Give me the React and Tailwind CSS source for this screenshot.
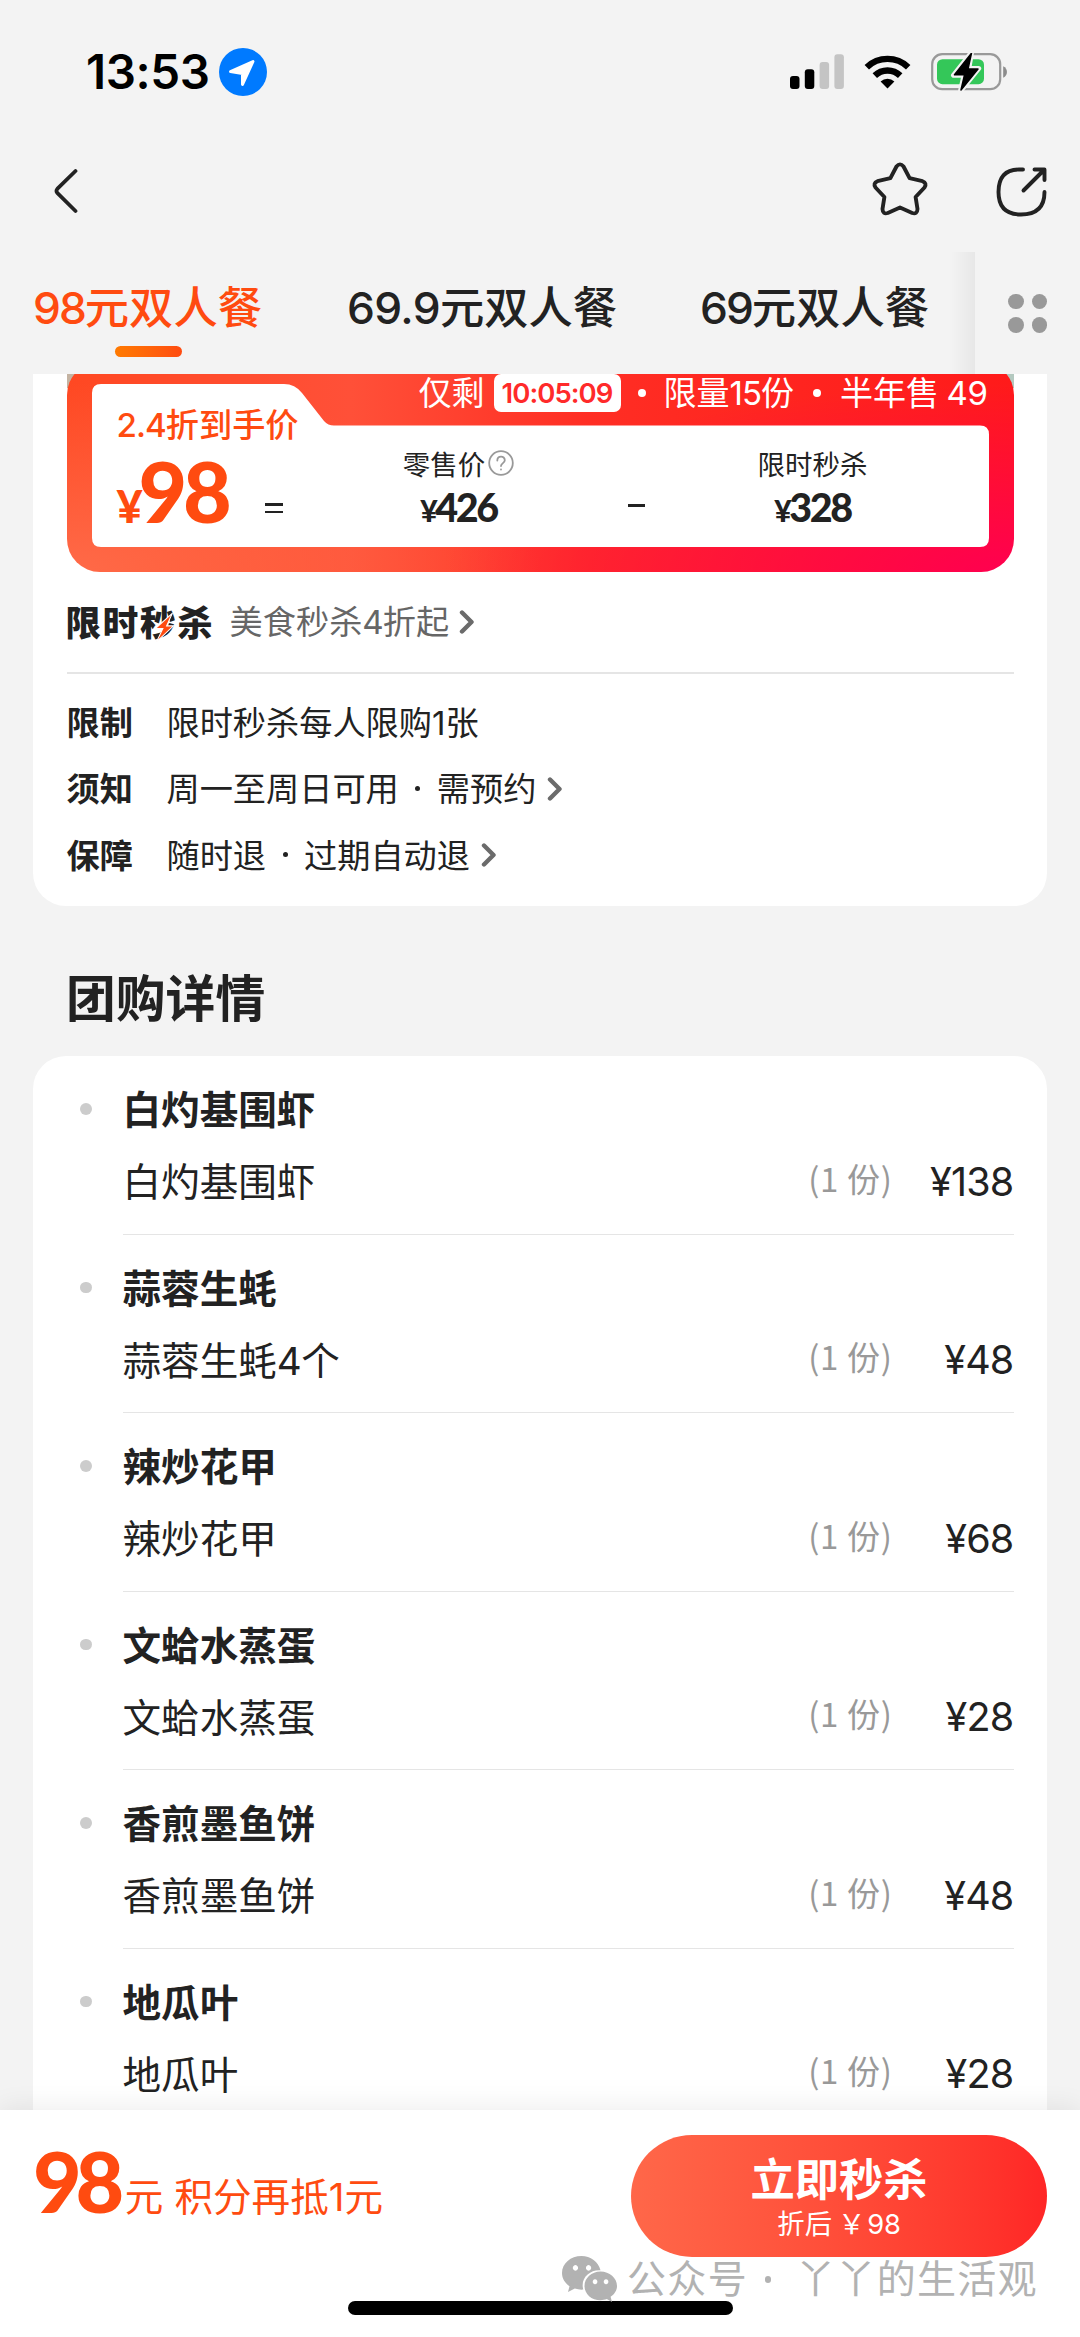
import React from "react";

const dishes = [
  { name: "白灼基围虾", item: ["白灼基围虾"], price: "138" },
  { name: "蒜蓉生蚝", item: ["蒜蓉生蚝", "4", "个"], price: "48" },
  { name: "辣炒花甲", item: ["辣炒花甲"], price: "68" },
  { name: "文蛤水蒸蛋", item: ["文蛤水蒸蛋"], price: "28" },
  { name: "香煎墨鱼饼", item: ["香煎墨鱼饼"], price: "48" },
  { name: "地瓜叶", item: ["地瓜叶"], price: "28" },
];

// Latin digits set inside Chinese text
function N({ children, className = "tracking-[-0.03em]" }) {
  return (
    <span className={"font-['Inter','Noto_Sans_CJK_SC',sans-serif] leading-[0] " + className}>
      {children}
    </span>
  );
}

function Chevron({ className = "" }) {
  return (
    <svg className={className} width="16" height="26" viewBox="0 0 16 26" fill="none" stroke="#6b6b6b" strokeWidth="4.4" strokeLinecap="round" strokeLinejoin="round">
      <path d="M3 3.5 12.5 13 3 22.5" />
    </svg>
  );
}

function StatusBar() {
  return (
    <div className="flex h-[144px] items-center pl-[86px] pr-[72px]">
      <span className="w-[133px] whitespace-nowrap font-['Inter',sans-serif] text-[47.5px] font-semibold leading-none tracking-[-0.008em] text-black">
        13:53
      </span>
      <svg width="48" height="48" viewBox="0 0 48 48">
        <circle cx="24" cy="24" r="24" fill="#007aff" />
        <path d="M11.5 23.5 34 13.5 23.5 36.5V25.5Z" fill="#fff" stroke="#fff" strokeWidth="3" strokeLinejoin="round" />
      </svg>
      <svg className="ml-auto" width="218" height="38" viewBox="0 0 218 38">
        <rect x="0" y="23" width="9.5" height="13" rx="3" />
        <rect x="14.8" y="16.3" width="9.5" height="19.7" rx="3" />
        <rect x="29.6" y="9" width="9.5" height="27" rx="3" fill="#c4c4c4" />
        <rect x="44.4" y="1.3" width="9.5" height="34.7" rx="3" fill="#c4c4c4" />
        <path d="M97.5 35.5 90.6 28.4A10.2 10.2 0 0 1 104.4 28.4Z" />
        <g fill="none" stroke="#000" strokeWidth="6.4">
          <path d="M84.8 22.6a18.2 18.2 0 0 1 25.4 0" />
          <path d="M76.8 14.2a30 30 0 0 1 41.4 0" />
        </g>
        <rect x="142.2" y="1.2" width="68" height="35" rx="10" fill="none" stroke="#999" strokeWidth="2.2" />
        <path d="M213.2 13.2c5 2.3 5 9.3 0 11.600z" fill="#8c8c8c" />
        <rect x="147" y="6.2" width="47" height="25" rx="5.500" fill="#34c759" />
        <path d="M181.500-.5 163.500 22.200H174L170.500 38 188.700 15.500H178.800Z" stroke="#f3f3f3" strokeWidth="5" strokeLinejoin="round" />
        <path d="M181.500 0.200 164.500 21.800H174.500L171 37 188 16H178Z" strokeLinejoin="round" stroke="#000" strokeWidth="1.500" />
      </svg>
    </div>
  );
}

function NavBar() {
  return (
    <div className="flex h-[108px] items-start pl-[53px] pr-[32px]">
      <svg className="mt-[24px]" width="28" height="46" viewBox="0 0 28 46" fill="none" stroke="#222" strokeWidth="3.800" strokeLinecap="round" strokeLinejoin="round">
        <path d="M22.500 3 4.500 20.600Q2.500 23 4.500 25.200L22.500 43" />
      </svg>
      <svg className="ml-auto mt-[17px]" width="58" height="56" viewBox="0 0 58 56" fill="none" stroke="#222" strokeWidth="3.900" strokeLinejoin="round">
        <path d="M25.500 5.500Q29 1.200 32.500 5.500L38.600 17.200 51.500 20.200Q56.300 22.200 53.500 26.500L44.600 36 46.500 48Q46.300 53.500 41.200 52L29 46.500 16.800 52Q11.700 53.500 11.500 48L13.400 36 4.500 26.500Q1.700 22.200 6.500 20.200L19.400 17.200Z" />
      </svg>
      <svg className="ml-[67px] mt-[22px]" width="52" height="52" viewBox="0 0 52 52" fill="none" stroke="#222" strokeWidth="3.900" strokeLinecap="round" strokeLinejoin="round">
        <path d="M27 3.500H23Q2.500 3.500 2.500 26T25 48.500Q48.500 48.500 48.500 26" />
        <path d="M38.500 3.500H48.500V14M48 4 27.500 24.500" />
      </svg>
    </div>
  );
}

function Tabs() {
  return (
    <div className="flex h-[122px]">
      <div className="relative flex h-full w-[975px] gap-[85px] overflow-hidden whitespace-nowrap pl-[33px] pt-[31px] text-[44.3px] font-medium leading-[44px] text-[#222]">
        <div className="flex w-[229px] flex-col items-center text-[#ff4b10]">
          <span className="h-[44px]"><N className="tracking-[-0.045em]">98</N>元双人餐</span>
          <span className="mt-[19px] h-[11px] w-[67px] translate-x-px rounded-full bg-linear-to-r from-[#ff7a00] to-[#ff4b10]" />
        </div>
        <div className="w-[268px]"><N className="tracking-[-0.015em]">69.9</N>元双人餐</div>
        <div><N className="tracking-[-0.045em]">69</N>元双人餐</div>
        <div className="absolute right-0 top-0 h-full w-[24px] bg-linear-to-r from-transparent to-black/5" />
      </div>
      <div className="flex flex-1 items-center">
        <div className="ml-[33px] grid grid-cols-2 gap-x-[8px] gap-y-[8px]">
          {[0, 1, 2, 3].map((i) => (
            <span key={i} className="size-[15.500px] rounded-full bg-[#999]" />
          ))}
        </div>
      </div>
    </div>
  );
}

function Price({ value }) {
  return (
    <span className="mt-[9px] whitespace-nowrap font-['Lato',sans-serif] text-[39.5px] font-black leading-[40px] tracking-[-0.06em]">
      <span className="text-[30px]">¥</span>
      {value}
    </span>
  );
}

function Banner() {
  return (
    <div className="relative h-[198px] w-[947px]">
      {/* background scrolled partly under the tab bar */}
      <div className="absolute inset-0 overflow-hidden bg-[linear-gradient(90deg,#c4b3a2_50%,#b4c9c0_50%)] bg-[length:100%_14px] bg-no-repeat">
        <div className="-mt-[12px] h-[210px] rounded-[33px] bg-[radial-gradient(ellipse_60%_90%_at_100%_100%,#ff0050_0%,#ff005000_100%),radial-gradient(ellipse_50%_90%_at_0%_100%,#ff6a48_0%,#ff6a4800_100%),linear-gradient(90deg,#ff4822_0%,#ff5038_30%,#ff2e24_55%,#ff1a1a_100%)]">
          <svg width="947" height="210" viewBox="0 0 947 210">
            <path d="M25 31Q25 22 34 22H217Q228 22 235 31L257 59Q261 63.500 267 63.500H913Q922 63.500 922 72.500V176Q922 185 913 185H34Q25 185 25 176Z" fill="#fff" />
          </svg>
        </div>
      </div>
      <div className="relative flex h-[51px] items-start whitespace-nowrap pl-[352px] text-[33px] leading-[38px] text-white">
        <span className="-mt-[2px]">仅剩</span>
        <span className="ml-[9px] flex h-[38px] w-[127px] items-center justify-center rounded-[7px] bg-white font-['Inter',sans-serif] text-[27.500px] font-semibold tracking-[-0.035em] text-[#ff2a2a]">
          10:05:09
        </span>
        <span className="ml-[17px] mt-[15px] size-[8px] rounded-full bg-white" />
        <span className="-mt-[2px] ml-[18px]">限量<N>15</N>份</span>
        <span className="ml-[19px] mt-[15px] size-[8px] rounded-full bg-white" />
        <span className="-mt-[2px] ml-[19px]">半年售 <N className="tracking-[-0.01em]">49</N></span>
      </div>
      <div className="relative flex h-[122px] whitespace-nowrap">
        <div className="-mt-[20px] w-[180px] pl-[50px] text-[#ff4b10]">
          <div className="text-[33.2px] font-medium leading-[36px]"><N className="tracking-[-0.03em]">2.4</N>折到手价</div>
          <div className="mt-[8px] font-['Lato',sans-serif] text-[84px] font-black leading-[84px] tracking-[-0.05em]">
            <span className="text-[45px]">¥</span>98
          </div>
        </div>
        <div className="ml-[18px] mt-[78px] flex h-[10px] w-[18px] flex-col justify-between">
          <span className="h-[2.500px] bg-[#222]" />
          <span className="h-[2.500px] bg-[#222]" />
        </div>
        <div className="ml-[118px] mt-[23px] flex w-[116px] flex-col items-center text-[#222]">
          <div className="flex items-center gap-[3px] text-[27.500px] leading-[30px]">
            零售价
            <svg width="26" height="26" viewBox="0 0 26 26" fill="none" stroke="#999" strokeWidth="1.800" strokeLinecap="round">
              <circle cx="13" cy="13" r="11.800" />
              <path d="M9.300 10.500C9.300 5.300 16.800 5.300 16.800 10.300 16.800 13 13 13.200 13 16M13 19.300V19.600" />
            </svg>
          </div>
          <Price value="426" />
        </div>
        <div className="ml-[111px] mt-[79px] h-[2.500px] w-[17px] bg-[#222]" />
        <div className="ml-[112px] mt-[23px] flex w-[112px] flex-col items-center text-[#222]">
          <div className="text-[27.500px] leading-[30px]">限时秒杀</div>
          <Price value="328" />
        </div>
      </div>
    </div>
  );
}

function InfoRow({ label, children, more }) {
  return (
    <div className="flex h-[66.500px] items-center whitespace-nowrap text-[33.200px] leading-none">
      <span className="-mt-[4px] w-[100px] font-bold">{label}</span>
      <span className="-mt-[4px] flex items-center">{children}</span>
      {more && <Chevron className="ml-[11px]" />}
    </div>
  );
}

function Dot() {
  return (
    <span className="flex w-[38px] justify-center pt-[3px]">
      <span className="size-[5px] rounded-full bg-[#222]" />
    </span>
  );
}

function OfferCard() {
  return (
    <div className="mx-[33px] h-[532px] rounded-b-[33px] bg-white px-[33.500px] text-[#222]">
      <Banner />
      <div className="flex h-[100px] items-center whitespace-nowrap">
        <div className="relative -ml-[1px] -mt-[3px] flex text-[35.500px] font-black leading-none tracking-[0.05em]">
          限时秒杀
          <svg className="absolute left-[87px] top-[9px]" width="24" height="32" viewBox="0 0 22 30">
            <path d="M18 1 2 15.500H9L3 28 19 13H12.500Z" fill="#ff4b10" stroke="#fff" strokeWidth="1" />
          </svg>
        </div>
        <span className="-mt-[4px] ml-[15px] text-[33.200px] leading-none text-[#666]">美食秒杀<N>4</N>折起</span>
        <Chevron className="ml-[10px]" />
      </div>
      <div className="mb-[15px] h-[2px] bg-[#e5e5e5]" />
      <InfoRow label="限制"><span>限时秒杀每人限购<N className="tracking-normal">1</N>张</span></InfoRow>
      <InfoRow label="须知" more>周一至周日可用<Dot />需预约</InfoRow>
      <InfoRow label="保障" more>随时退<Dot />过期自动退</InfoRow>
    </div>
  );
}

function Dish({ dish, last }) {
  return (
    <div className="flex h-[178.600px] pl-[47px]">
      <span className="mt-[47px] size-[11.500px] shrink-0 rounded-full bg-[#ccc]" />
      <div className={"ml-[31px] flex-1 whitespace-nowrap text-[38.600px] leading-[44px] text-[#222] " + (last ? "" : "border-b border-[#e5e5e5]")}>
        <div className="mt-[29px] font-bold">{dish.name}</div>
        <div className="mt-[28px] flex h-[44px] items-center">
          <span>{dish.item[0]}{dish.item[1] && <N className="tracking-[-0.01em]">{dish.item[1]}</N>}{dish.item[2]}</span>
          <span className="-mt-[3px] ml-auto text-[33px] tracking-[0.02em] text-[#999]">(1 份)</span>
          <span className="mt-[5px] w-[121px] text-right font-['Inter',sans-serif] text-[39.5px] tracking-[-0.02em]">¥{dish.price}</span>
        </div>
      </div>
    </div>
  );
}

function BottomBar() {
  return (
    <div className="absolute inset-x-0 bottom-0 h-[227px] bg-white shadow-[0_-4px_24px_rgba(0,0,0,0.07)]">
      <div className="flex h-[147px] justify-between pl-[33px] pr-[33px] pt-[25px]">
        <div className="mt-[4px] flex h-[84px] items-baseline whitespace-nowrap text-[38.600px] leading-[84px] text-[#ff4b10]">
          <span className="font-['Lato',sans-serif] text-[84px] font-black tracking-[-0.075em]">98</span>
          <span className="relative -top-[2px] ml-[7px]">元</span>
          <span className="relative -top-[2px] ml-[11px]">积分再抵<N className="tracking-normal">1</N>元</span>
        </div>
        <button className="flex h-[122px] w-[416px] flex-col items-center rounded-full bg-linear-to-r from-[#ff6749] to-[#ff2626] pt-[17px] text-white">
          <span className="text-[44.3px] font-bold leading-[50px]">立即秒杀</span>
          <span className="mt-[3px] text-[27.3px] leading-[34px]">折后 ￥<N className="ml-[2px] tracking-[-0.01em]">98</N></span>
        </button>
      </div>
      <div className="absolute left-[348px] top-[191px] h-[14px] w-[385px] rounded-full bg-black" />
      <div className="absolute left-[562px] top-[146px] flex items-start whitespace-nowrap text-[39px] leading-[44px] tracking-[0.034em] text-[#b2b2b2]">
        <svg width="56" height="46" viewBox="0 0 56 46">
          <path fillRule="evenodd" fill="#b2b2b2" d="M19.500 0C8.700 0 0 7.500 0 17c0 5.400 2.900 10.100 7.500 13.200L6 36l6.800-3.400c2.500.8 5.500 1.200 8.500 1C18 22 28 13.500 38.500 14.300 36.500 5.800 28.500 0 19.500 0ZM13.400 9a2.600 2.900 0 1 0 .1 0ZM26.500 9a2.600 2.900 0 1 0 .1 0Z" />
          <path fillRule="evenodd" fill="#b2b2b2" d="M38.500 15.500C29.500 15.500 22.500 22 22.500 30c0 8 7 14.300 16 14.300 2.200 0 4.500-.5 6.300-1.200L50 46l-1.400-5.200C52.400 38.200 55 34.500 55 30c0-8-7.500-14.500-16.500-14.500ZM33 23.300a2.300 2.500 0 1 0 .1 0ZM44 23.300a2.300 2.500 0 1 0 .1 0Z" />
        </svg>
        <span className="-mt-[2px] ml-[9px]">公众号</span>
        <span className="mt-[20px] flex w-[48px] pl-[17px]">
          <span className="size-[6.500px] rounded-full bg-[#b2b2b2]" />
        </span>
        <span className="-mt-[2px]">丫丫的生活观</span>
      </div>
    </div>
  );
}

export default function App() {
  return (
    <div className="relative h-[2337px] w-[1080px] overflow-hidden bg-[#f3f3f3] font-['Noto_Sans_CJK_SC',sans-serif]">
      <StatusBar />
      <NavBar />
      <Tabs />
      <OfferCard />
      <h2 className="ml-[66px] mt-[64px] h-[86px] text-[49.800px] font-bold leading-[50px] text-[#222]">团购详情</h2>
      <div className="mx-[33px] rounded-t-[33px] bg-white pr-[33.500px]">
        {dishes.map((d, i) => (
          <Dish key={i} dish={d} last={i === dishes.length - 1} />
        ))}
      </div>
      <BottomBar />
    </div>
  );
}
